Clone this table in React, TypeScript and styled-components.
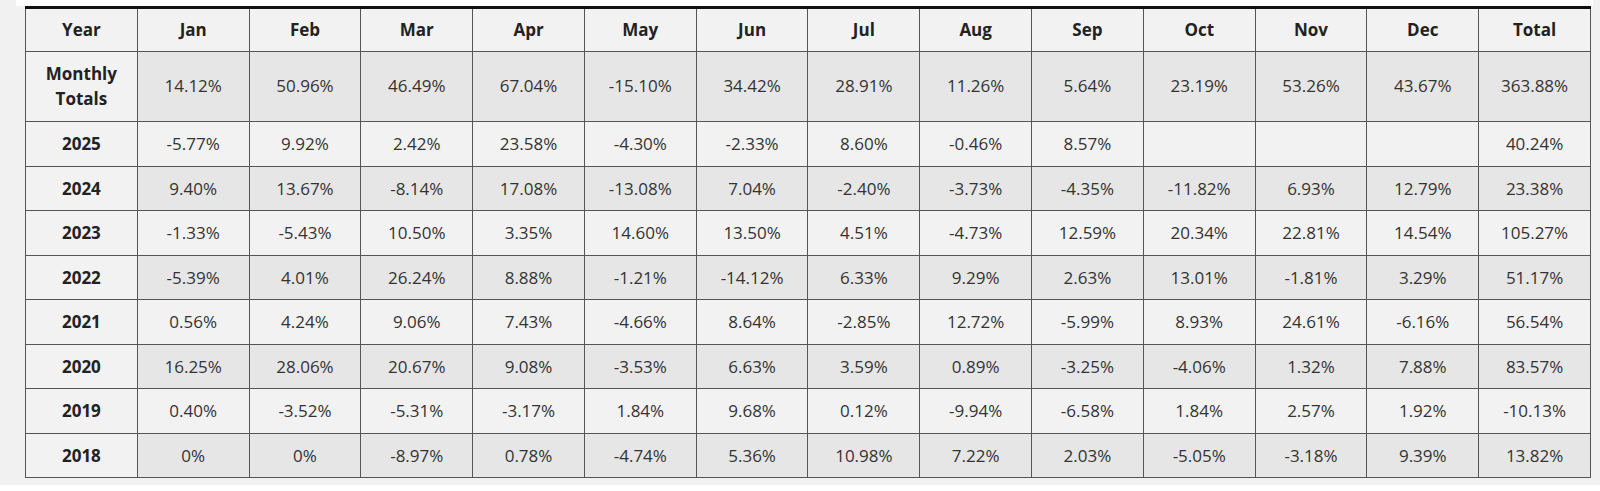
import styled, { createGlobalStyle } from 'styled-components';

const GlobalStyle = createGlobalStyle`
  html, body { margin: 0; padding: 0; background: #ffffff; }
  body { font-family: "Open Sans", "Liberation Sans", sans-serif; }
`;

const Frame = styled.div`
  background: #f1f1f1;
  padding: 0 7px 7px 16px;
  width: 1600px;
  box-sizing: border-box;
`;

const TopStrip = styled.div`
  height: 6px;
  background: #ffffff;
`;

const TableWrap = styled.div`
  padding-left: 9px;
  width: 1568px;
`;

const Table = styled.table`
  width: 1566px;
  table-layout: fixed;
  border-collapse: collapse;
  border-top: 3px solid #111;
  color: #333;
`;

const Th = styled.th`
  background: #f2f2f2;
  border: 1px solid #555;
  border-top: none;
  padding: 9px 6px;
  font-size: 17px;
  font-weight: 700;
  line-height: 24px;
  color: #222;
  text-align: center;
`;

const TotalsRow = styled.tr`
  td { line-height: 24.5px; }
`;

const RowHead = styled.td`
  background: #f2f2f2;
  border: 1px solid #555;
  padding: 10px 6px;
  font-size: 17px;
  font-weight: 700;
  line-height: 23.5px;
  color: #222;
  text-align: center;
`;

const Cell = styled.td<{ $shade: boolean }>`
  background: ${(p) => (p.$shade ? '#e6e6e6' : '#f2f2f2')};
  border: 1px solid #555;
  padding: 10px 6px;
  font-size: 17px;
  line-height: 23.5px;
  text-align: center;
  color: #333;
`;

const months = ['Jan', 'Feb', 'Mar', 'Apr', 'May', 'Jun', 'Jul', 'Aug', 'Sep', 'Oct', 'Nov', 'Dec'];

const monthly = ['14.12%', '50.96%', '46.49%', '67.04%', '-15.10%', '34.42%', '28.91%', '11.26%', '5.64%', '23.19%', '53.26%', '43.67%', '363.88%'];

const years: [string, string[]][] = [
  ['2025', ['-5.77%', '9.92%', '2.42%', '23.58%', '-4.30%', '-2.33%', '8.60%', '-0.46%', '8.57%', '', '', '', '40.24%']],
  ['2024', ['9.40%', '13.67%', '-8.14%', '17.08%', '-13.08%', '7.04%', '-2.40%', '-3.73%', '-4.35%', '-11.82%', '6.93%', '12.79%', '23.38%']],
  ['2023', ['-1.33%', '-5.43%', '10.50%', '3.35%', '14.60%', '13.50%', '4.51%', '-4.73%', '12.59%', '20.34%', '22.81%', '14.54%', '105.27%']],
  ['2022', ['-5.39%', '4.01%', '26.24%', '8.88%', '-1.21%', '-14.12%', '6.33%', '9.29%', '2.63%', '13.01%', '-1.81%', '3.29%', '51.17%']],
  ['2021', ['0.56%', '4.24%', '9.06%', '7.43%', '-4.66%', '8.64%', '-2.85%', '12.72%', '-5.99%', '8.93%', '24.61%', '-6.16%', '56.54%']],
  ['2020', ['16.25%', '28.06%', '20.67%', '9.08%', '-3.53%', '6.63%', '3.59%', '0.89%', '-3.25%', '-4.06%', '1.32%', '7.88%', '83.57%']],
  ['2019', ['0.40%', '-3.52%', '-5.31%', '-3.17%', '1.84%', '9.68%', '0.12%', '-9.94%', '-6.58%', '1.84%', '2.57%', '1.92%', '-10.13%']],
  ['2018', ['0%', '0%', '-8.97%', '0.78%', '-4.74%', '5.36%', '10.98%', '7.22%', '2.03%', '-5.05%', '-3.18%', '9.39%', '13.82%']],
];

export default function App() {
  return (
    <>
      <GlobalStyle />
      <Frame>
        <TopStrip />
        <TableWrap>
          <Table>
            <thead>
              <tr>
                <Th>Year</Th>
                {months.map((m) => (
                  <Th key={m}>{m}</Th>
                ))}
                <Th>Total</Th>
              </tr>
            </thead>
            <tbody>
              <TotalsRow>
                <RowHead>
                  Monthly
                  <br />
                  Totals
                </RowHead>
                {monthly.map((v, i) => (
                  <Cell key={i} $shade>
                    {v}
                  </Cell>
                ))}
              </TotalsRow>
              {years.map(([year, vals], r) => (
                <tr key={year}>
                  <RowHead>{year}</RowHead>
                  {vals.map((v, i) => (
                    <Cell key={i} $shade={r % 2 === 1}>
                      {v}
                    </Cell>
                  ))}
                </tr>
              ))}
            </tbody>
          </Table>
        </TableWrap>
      </Frame>
    </>
  );
}
